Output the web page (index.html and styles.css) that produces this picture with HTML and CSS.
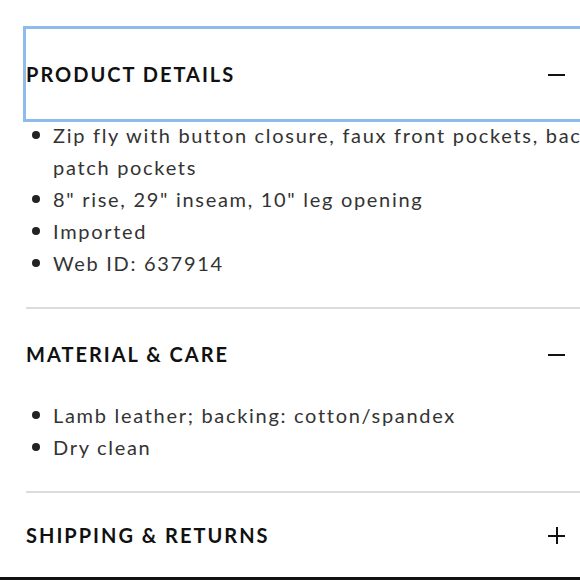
FILE: index.html
```html
<!DOCTYPE html>
<html>
<head>
<meta charset="utf-8">
<link rel="stylesheet" href="styles.css">
</head>
<body>
<div class="page">
  <section class="acc">
    <button class="acc-head focused">
      <span class="acc-title">PRODUCT DETAILS</span>
      <span class="icon minus"></span>
    </button>
    <ul class="acc-list first">
      <li>Zip fly with button closure, faux front pockets, back patch pockets</li>
      <li>8" rise, 29" inseam, 10" leg opening</li>
      <li>Imported</li>
      <li>Web ID: 637914</li>
    </ul>
  </section>
  <section class="acc">
    <button class="acc-head">
      <span class="acc-title">MATERIAL &amp; CARE</span>
      <span class="icon minus"></span>
    </button>
    <ul class="acc-list">
      <li>Lamb leather; backing: cotton/spandex</li>
      <li>Dry clean</li>
    </ul>
  </section>
  <section class="acc last">
    <button class="acc-head short">
      <span class="acc-title">SHIPPING &amp; RETURNS</span>
      <span class="icon plus"></span>
    </button>
  </section>
</div>
<div class="bottom-bar"></div>
</body>
</html>
```

FILE: styles.css
```css
html, body {
  margin: 0;
  padding: 0;
  background: #fff;
  overflow: hidden;
  width: 580px;
  height: 580px;
}
.page {
  width: 574px;
  padding-left: 26px;
  padding-top: 29px;
  font-family: Lato, "Liberation Sans", sans-serif;
}
.acc {
  border-bottom: 2px solid #dcdcdc;
}
.acc.last {
  border-bottom: none;
}
.acc-head {
  display: flex;
  align-items: center;
  justify-content: space-between;
  width: 100%;
  height: 90px;
  padding: 0 35px 0 0;
  margin: 0;
  border: none;
  background: #fff;
  font-family: inherit;
  cursor: pointer;
}
.acc-head.short {
  height: 84px;
}
.acc-head.focused {
  outline: 3px solid #8fbbec;
}
.acc-title {
  font-size: 20px;
  font-weight: 700;
  letter-spacing: 2px;
  color: #111;
}
.icon {
  position: relative;
  width: 17px;
  height: 17px;
  flex: none;
}
.icon::before,
.icon::after {
  content: "";
  position: absolute;
  background: #111;
}
.icon::before {
  left: 0;
  right: 0;
  top: 8px;
  height: 2px;
}
.minus::after {
  display: none;
}
.plus::after {
  top: 0;
  bottom: 0;
  left: 8px;
  width: 2px;
}
.acc-list {
  list-style: none;
  margin: 0;
  padding: 0 0 28px 27px;
  color: #333;
  font-size: 20px;
  line-height: 32px;
  letter-spacing: 1.7px;
}
.acc-list li {
  position: relative;
}
.acc-list li::before {
  content: "";
  position: absolute;
  left: -21px;
  top: 12px;
  width: 8px;
  height: 8px;
  border-radius: 50%;
  background: #222;
}
.bottom-bar {
  position: absolute;
  left: 0;
  right: 0;
  bottom: 0;
  height: 3px;
  background: #111;
}
```
